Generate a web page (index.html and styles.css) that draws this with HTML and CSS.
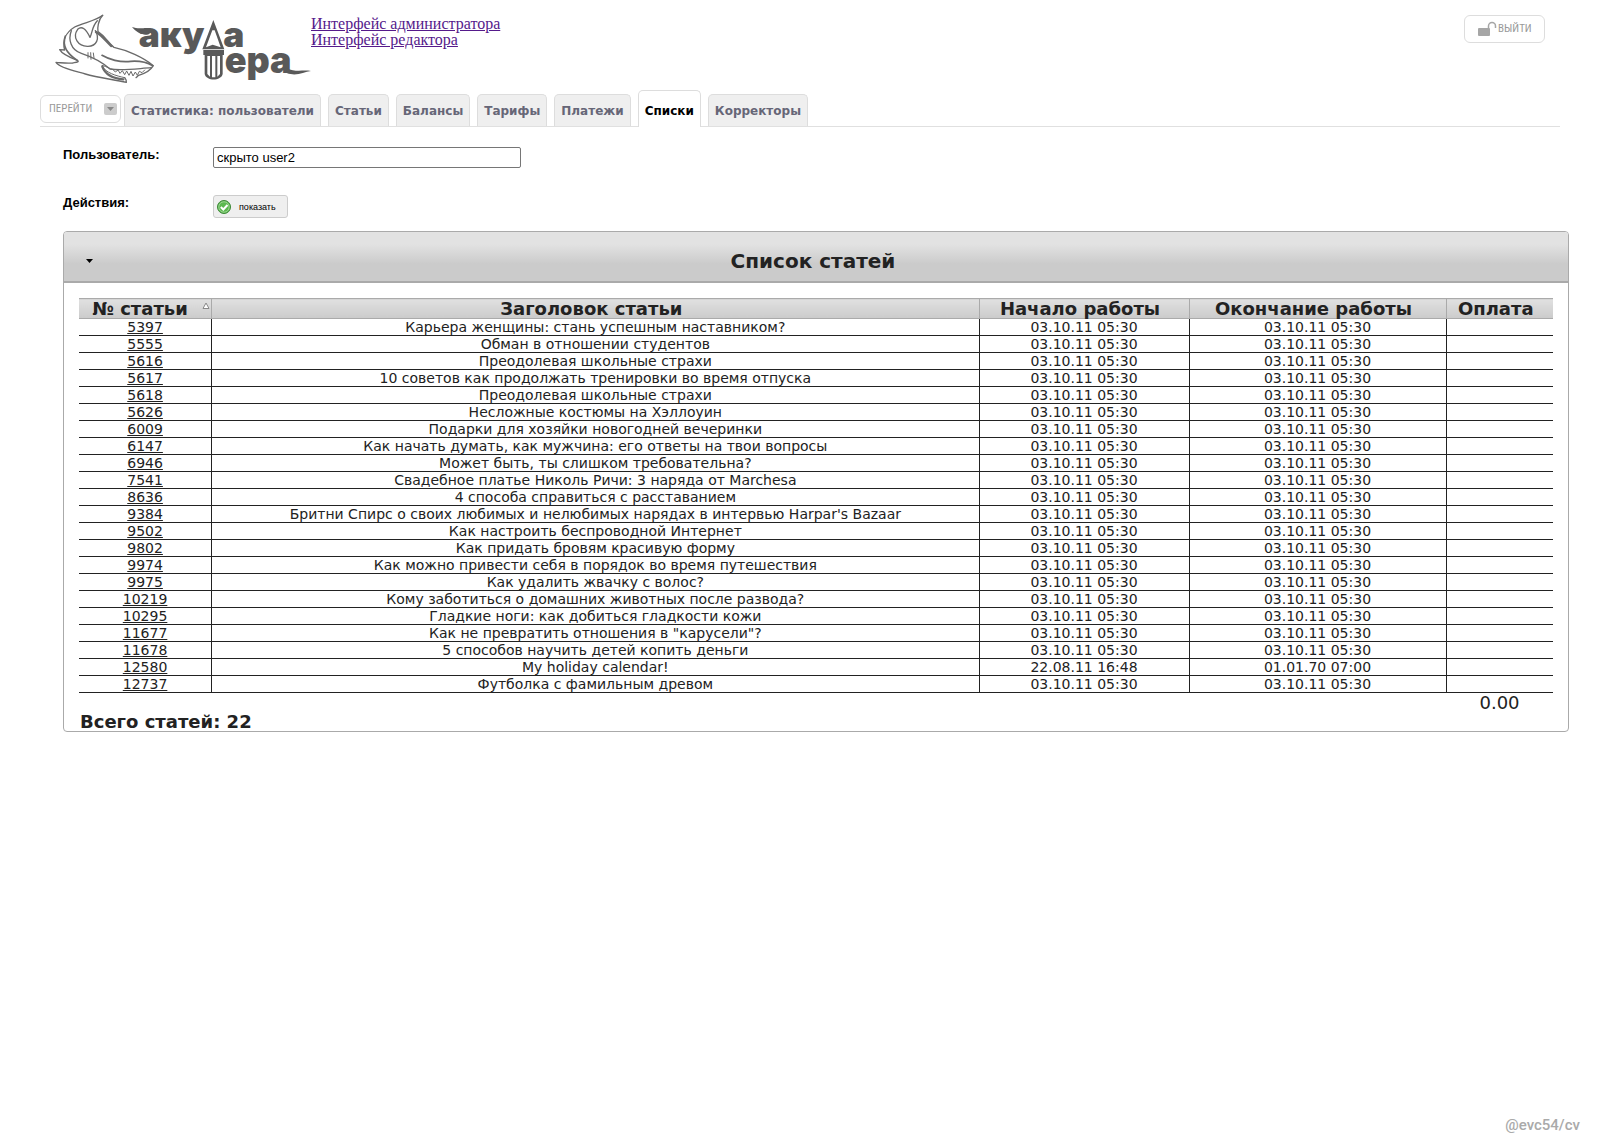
FILE: index.html
```html
<!DOCTYPE html>
<html lang="ru">
<head>
<meta charset="utf-8">
<title>Акула пера — Списки</title>
<link rel="stylesheet" href="styles.css">
</head>
<body>
<header class="top">
  <svg class="logo" viewBox="75 42 768 210" role="img" aria-label="Акула пера">
    <g fill="none" stroke="#6a6a6a" stroke-width="4" stroke-linejoin="round" stroke-linecap="round">
      <path d="M218 46C200 62 160 68 134 81C108 97 96 122 104 150L89 149C96 162 118 172 142 181C150 186 138 187 128 189C108 191 94 188 78 187C90 205 140 214 166 222C205 234 250 238 289 247C290 240 288 238 284 233"/>
      <path d="M218 46C204 60 202 86 204 95C230 112 236 132 252 142C290 150 340 172 370 197C360 214 340 222 326 226L318 233"/>
      <path d="M124 92C114 118 122 150 154 160C190 172 214 184 240 207C276 213 320 206 364 203"/>
      <path d="M143 88C126 112 144 140 174 139C200 138 210 116 196 92M143 88C156 76 168 88 180 112C188 96 186 78 202 62"/>
      <path d="M216 166C236 178 270 188 302 184C330 182 356 190 368 197" stroke-width="5"/>
      <path d="M284 233C260 228 224 218 216 196C232 200 240 207 248 208L256 216L264 210L270 220L277 212L284 224L290 213L297 226L303 214L309 228L316 216L322 226L328 214L336 218L344 210" stroke-width="3"/>
      <path d="M217 200C226 224 252 236 280 238" stroke-width="7"/>
      <path d="M174 158L174 174M182 158L183 178M190 159L192 174" stroke-width="3"/>
      <path d="M198 96C218 108 228 124 244 138" stroke-width="7"/>
      <path d="M106 108C96 136 112 162 142 181" stroke-width="5"/>
    </g>
    <g fill="#595959">
      <path d="M306 81C324 88 342 83 352 84C368 86 364 104 350 104C332 104 316 94 306 81Z"/>
      <text class="logo-text" x="326" y="142" font-size="106">аку</text>
      <text class="logo-text" x="580" y="142" font-size="106">а</text>
      <text class="logo-text" x="584" y="219" font-size="108">ера</text>
      <path d="M770 204C796 218 816 209 843 213C820 216 800 230 770 219Z"/>
      <path fill-rule="evenodd" d="M550 60L583 148L517 148ZM547 91L528 142L548 134L572 142L554 91Z"/>
      <path fill-rule="evenodd" d="M520 150H582V165H578V222C574 244 528 244 524 222V165H520ZM532 168V222L540 230V168ZM546 168V232H556V168ZM562 168V230L570 222V168Z"/>
    </g>
  </svg>
  <nav class="roles">
    <a href="#admin">Интерфейс администратора</a>
    <a href="#editor">Интерфейс редактора</a>
  </nav>
  <button class="pill exit" type="button">
    <svg width="19" height="16" viewBox="0 0 19 16" aria-hidden="true">
      <rect x="0" y="7" width="12" height="8" rx="1" fill="#a6a6a6"/>
      <path d="M10.500 8V5a3.500 3.500 0 0 1 7 0V7" fill="none" stroke="#a6a6a6" stroke-width="1.500"/>
    </svg>ВЫЙТИ
  </button>
</header>

<nav class="tabs">
  <button class="pill go" type="button">ПЕРЕЙТИ
    <svg width="13" height="12" viewBox="0 0 13 12" aria-hidden="true">
      <rect width="13" height="12" rx="2" fill="#ccc"/><path d="M3 4h7l-3.500 4z" fill="#888"/>
    </svg>
  </button>
  <a class="tab" href="#stats">Статистика: пользователи</a>
  <a class="tab" href="#articles">Статьи</a>
  <a class="tab" href="#balances">Балансы</a>
  <a class="tab" href="#tariffs">Тарифы</a>
  <a class="tab" href="#payments">Платежи</a>
  <a class="tab active" href="#lists">Списки</a>
  <a class="tab" href="#correctors">Корректоры</a>
</nav>

<main>
  <form class="filter">
    <label for="user">Пользователь:</label>
    <input id="user" type="text" value="скрыто user2">
    <label for="show">Действия:</label>
    <button id="show" class="show" type="button">
      <svg width="14" height="14" viewBox="0 0 14 14" aria-hidden="true">
        <circle cx="7" cy="7" r="6.500" fill="#5cb850" stroke="#3b8636"/>
        <circle cx="7" cy="7" r="5.200" fill="none" stroke="#a9dca0" stroke-width=".8"/>
        <path d="M3.800 7l2.500 2.500 4.200-4.500" fill="none" stroke="#fff" stroke-width="2"/>
      </svg>показать
    </button>
  </form>

  <section class="card">
    <div class="card-head">
      <svg width="8" height="4" viewBox="0 0 8 4" aria-hidden="true"><path d="M0 0h7L3.500 4z" fill="#000"/></svg>
      <h1>Список статей</h1>
    </div>
    <div class="card-body">
      <table>
        <colgroup><col class="c-id"><col><col class="c-start"><col class="c-end"><col class="c-pay"></colgroup>
        <thead>
          <tr><th class="sorted">№ статьи<svg width="8" height="7" viewBox="0 0 8 7" aria-hidden="true"><path d="M1 6.500L4 1l3 5.500z" fill="#fff" stroke="#888"/></svg></th><th>Заголовок статьи</th><th>Начало работы</th><th>Окончание работы</th><th>Оплата</th></tr>
        </thead>
        <tbody>
          <tr><td><a href="#5397">5397</a></td><td>Карьера женщины: стань успешным наставником?</td><td>03.10.11 05:30</td><td>03.10.11 05:30</td><td></td></tr>
          <tr><td><a href="#5555">5555</a></td><td>Обман в отношении студентов</td><td>03.10.11 05:30</td><td>03.10.11 05:30</td><td></td></tr>
          <tr><td><a href="#5616">5616</a></td><td>Преодолевая школьные страхи</td><td>03.10.11 05:30</td><td>03.10.11 05:30</td><td></td></tr>
          <tr><td><a href="#5617">5617</a></td><td>10 советов как продолжать тренировки во время отпуска</td><td>03.10.11 05:30</td><td>03.10.11 05:30</td><td></td></tr>
          <tr><td><a href="#5618">5618</a></td><td>Преодолевая школьные страхи</td><td>03.10.11 05:30</td><td>03.10.11 05:30</td><td></td></tr>
          <tr><td><a href="#5626">5626</a></td><td>Несложные костюмы на Хэллоуин</td><td>03.10.11 05:30</td><td>03.10.11 05:30</td><td></td></tr>
          <tr><td><a href="#6009">6009</a></td><td>Подарки для хозяйки новогодней вечеринки</td><td>03.10.11 05:30</td><td>03.10.11 05:30</td><td></td></tr>
          <tr><td><a href="#6147">6147</a></td><td>Как начать думать, как мужчина: его ответы на твои вопросы</td><td>03.10.11 05:30</td><td>03.10.11 05:30</td><td></td></tr>
          <tr><td><a href="#6946">6946</a></td><td>Может быть, ты слишком требовательна?</td><td>03.10.11 05:30</td><td>03.10.11 05:30</td><td></td></tr>
          <tr><td><a href="#7541">7541</a></td><td>Свадебное платье Николь Ричи: 3 наряда от Marchesa</td><td>03.10.11 05:30</td><td>03.10.11 05:30</td><td></td></tr>
          <tr><td><a href="#8636">8636</a></td><td>4 способа справиться с расставанием</td><td>03.10.11 05:30</td><td>03.10.11 05:30</td><td></td></tr>
          <tr><td><a href="#9384">9384</a></td><td>Бритни Спирс о своих любимых и нелюбимых нарядах в интервью Harpar's Bazaar</td><td>03.10.11 05:30</td><td>03.10.11 05:30</td><td></td></tr>
          <tr><td><a href="#9502">9502</a></td><td>Как настроить беспроводной Интернет</td><td>03.10.11 05:30</td><td>03.10.11 05:30</td><td></td></tr>
          <tr><td><a href="#9802">9802</a></td><td>Как придать бровям красивую форму</td><td>03.10.11 05:30</td><td>03.10.11 05:30</td><td></td></tr>
          <tr><td><a href="#9974">9974</a></td><td>Как можно привести себя в порядок во время путешествия</td><td>03.10.11 05:30</td><td>03.10.11 05:30</td><td></td></tr>
          <tr><td><a href="#9975">9975</a></td><td>Как удалить жвачку с волос?</td><td>03.10.11 05:30</td><td>03.10.11 05:30</td><td></td></tr>
          <tr><td><a href="#10219">10219</a></td><td>Кому заботиться о домашних животных после развода?</td><td>03.10.11 05:30</td><td>03.10.11 05:30</td><td></td></tr>
          <tr><td><a href="#10295">10295</a></td><td>Гладкие ноги: как добиться гладкости кожи</td><td>03.10.11 05:30</td><td>03.10.11 05:30</td><td></td></tr>
          <tr><td><a href="#11677">11677</a></td><td>Как не превратить отношения в "карусели"?</td><td>03.10.11 05:30</td><td>03.10.11 05:30</td><td></td></tr>
          <tr><td><a href="#11678">11678</a></td><td>5 способов научить детей копить деньги</td><td>03.10.11 05:30</td><td>03.10.11 05:30</td><td></td></tr>
          <tr><td><a href="#12580">12580</a></td><td>My holiday calendar!</td><td>22.08.11 16:48</td><td>01.01.70 07:00</td><td></td></tr>
          <tr><td><a href="#12737">12737</a></td><td>Футболка с фамильным древом</td><td>03.10.11 05:30</td><td>03.10.11 05:30</td><td></td></tr>
        </tbody>
        <tfoot><tr><td colspan="4"></td><td>0.00</td></tr></tfoot>
      </table>
      <p class="total">Всего статей: 22</p>
    </div>
  </section>
</main>

<footer>@evc54/cv</footer>
</body>
</html>
```
FILE: styles.css
```css
* { box-sizing: border-box; }

body {
  margin: 0;
  min-height: 100vh;
  display: flex;
  flex-direction: column;
  background: #fff;
  color: #222;
  font-family: "DejaVu Sans", sans-serif;
}

button { font: inherit; cursor: pointer; }

.top {
  display: flex;
  align-items: flex-start;
  height: 90px;
  padding: 14px 55px 0;
}
.logo { width: 256px; height: 70px; flex: none; }
.logo-text { font-family: Inter, "Liberation Sans", sans-serif; font-weight: 900; }

.roles {
  display: flex;
  flex-direction: column;
  padding-top: 2px;
  font: 16px/16px "Liberation Serif", serif;
}
.roles a { color: #551a8b; }

.pill {
  display: flex;
  align-items: center;
  height: 28px;
  border: 1px solid #ddd;
  border-radius: 6px;
  background: #fff;
  color: #999;
  font: 11px/16px "Roboto Condensed", "Liberation Sans Narrow", Roboto, sans-serif;
}
.pill svg { flex: none; }
.exit { width: 81px; margin-left: auto; padding: 0 0 0 13px; gap: 1px; margin-top: 1px; }
.go { width: 81px; padding: 0 3px 0 8px; justify-content: space-between; margin: 0 3px 3px 0; }

.tabs {
  display: flex;
  align-items: flex-end;
  margin: 0 40px;
  border-bottom: 1px solid #e0e0e0;
}
.tab {
  height: 32px;
  margin-right: 7px;
  padding: 0 6px;
  border: 1px solid #ddd;
  border-bottom: 0;
  border-radius: 5px 5px 0 0;
  background: #efefef;
  color: #667;
  font-size: 12px;
  font-weight: bold;
  line-height: 32px;
  text-decoration: none;
  white-space: nowrap;
}
.tab.active { height: 37px; margin-bottom: -1px; line-height: 40px; background: #fff; color: #000; }

main { padding: 20px 31px 0 63px; }

.filter {
  display: grid;
  grid-template-columns: 150px 308px;
  row-gap: 27px;
  font: 13px/16px "Liberation Sans", sans-serif;
  color: #000;
}
.filter label { font-weight: bold; }
.filter input {
  width: 100%;
  height: 21px;
  padding: 0 3px;
  border: 1px solid #767676;
  border-radius: 2px;
  font: inherit;
  color: #000;
}
.show {
  display: flex;
  align-items: center;
  gap: 8px;
  width: 75px;
  height: 23px;
  padding: 0 3px;
  border: 1px solid #ccc;
  border-radius: 3px;
  background: #efefef;
  color: #000;
  font-size: 9px;
}

.card { margin-top: 13px; border: 1px solid #aaa; border-radius: 4px; overflow: hidden; }
.card-head {
  display: flex;
  align-items: center;
  height: 51px;
  padding: 8px 36px 0 22px;
  border-bottom: 2px solid #aaa;
  background: linear-gradient(#e2e2e2 25%, #cbcbcb 65%);
}
h1 { flex: 1; margin: 0; font-size: 20px; line-height: 24px; text-align: center; }
.card-body { padding: 15px; padding-bottom: 0; }

table { width: 100%; table-layout: fixed; border-collapse: collapse; text-align: center; }
.c-id { width: 9%; }
.c-start { width: 210px; }
.c-end { width: 257px; }
.c-pay { width: 107px; }
th {
  height: 20px;
  padding: 0 8px 0 0;
  border: solid #aaa;
  border-width: 1px 1px 1px 0;
  background: linear-gradient(#e0e0e0, #cbcbcb);
  font-size: 18px;
  line-height: 18px;
}
th:last-child, tbody td:last-child { border-right: 0; }
th.sorted { padding: 0 0 0 12px; white-space: nowrap; }
th.sorted svg { margin-left: 14px; vertical-align: 6px; }
tbody td {
  height: 17px;
  padding: 0;
  border: solid #222;
  border-width: 0 1px 1px 0;
  font-size: 14px;
  line-height: 16px;
}
td a { color: inherit; }
tfoot td { padding: 0; font-size: 18px; line-height: 20px; }
.total { margin: 0; padding-left: 1px; font-size: 18px; font-weight: bold; line-height: 18px; }

footer {
  margin-top: auto;
  padding: 0 20px 5px;
  color: #aaa;
  font: 500 15px/20px Roboto, sans-serif;
  text-align: right;
}
```
